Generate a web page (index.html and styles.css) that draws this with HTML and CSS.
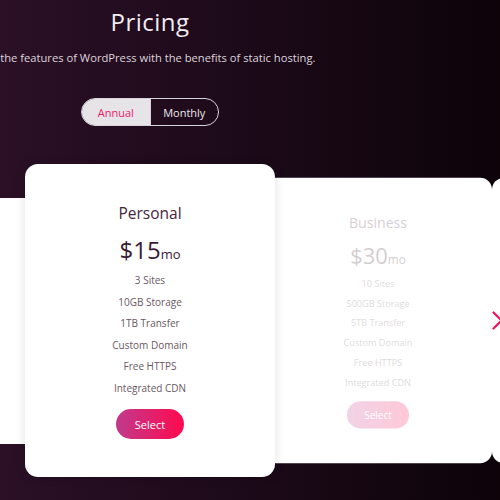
FILE: index.html
```html
<!DOCTYPE html>
<html>
<head>
<meta charset="utf-8">
<link rel="stylesheet" href="styles.css">
</head>
<body>
<main class="page">
  <header class="hero">
    <h1 class="title">Pricing</h1>
    <div class="subtitle"><p>All the features of WordPress with the benefits of static hosting.</p></div>
    <div class="toggle">
      <span class="opt active">Annual</span>
      <span class="opt">Monthly</span>
    </div>
  </header>
  <section class="carousel">
    <div class="track">
      <article class="card side">
        <div class="content">
          <h2 class="plan">Hobby</h2>
          <div class="price">$5<span class="unit">mo</span></div>
          <ul class="features">
            <li>1 Site</li><li>1GB Storage</li><li>100GB Transfer</li><li>Free HTTPS</li>
          </ul>
          <button class="select">Select</button>
        </div>
      </article>
      <article class="card main">
        <div class="content">
          <h2 class="plan">Personal</h2>
          <div class="price">$15<span class="unit">mo</span></div>
          <ul class="features">
            <li>3 Sites</li><li>10GB Storage</li><li>1TB Transfer</li><li>Custom Domain</li><li>Free HTTPS</li><li>Integrated CDN</li>
          </ul>
          <button class="select">Select</button>
        </div>
      </article>
      <article class="card side">
        <div class="content">
          <h2 class="plan">Business</h2>
          <div class="price">$30<span class="unit">mo</span></div>
          <ul class="features">
            <li>10 Sites</li><li>500GB Storage</li><li>5TB Transfer</li><li>Custom Domain</li><li>Free HTTPS</li><li>Integrated CDN</li>
          </ul>
          <button class="select">Select</button>
        </div>
      </article>
      <article class="card side">
        <div class="content">
          <h2 class="plan">Agency</h2>
          <div class="price">$60<span class="unit">mo</span></div>
          <ul class="features">
            <li>50 Sites</li><li>2TB Storage</li><li>20TB Transfer</li><li>Custom Domain</li><li>Free HTTPS</li><li>Integrated CDN</li>
          </ul>
          <button class="select">Select</button>
        </div>
      </article>
    </div>
    <button class="next" aria-label="Next">
      <svg width="12" height="20" viewBox="0 0 12 20"><path d="M1.5 1.5 L9.5 9.5 L1.5 17.5" fill="none" stroke="#f2125c" stroke-width="2.2" stroke-linecap="round" stroke-linejoin="round"/></svg>
    </button>
  </section>
</main>
</body>
</html>
```
FILE: styles.css
```css
* { box-sizing: border-box; }
html, body { margin: 0; padding: 0; }
body {
  width: 500px;
  height: 500px;
  overflow: hidden;
  background: linear-gradient(90deg, #2b1026 0%, #1d0a1a 45%, #0d0309 100%);
  font-family: "Open Sans", "DejaVu Sans", sans-serif;
}
.page { position: relative; width: 500px; height: 500px; }
.hero {
  width: 300px;
  display: flex;
  flex-direction: column;
  align-items: center;
}
.title {
  margin: 6px 0 0;
  font-weight: 400;
  font-size: 24px;
  line-height: 32px;
  color: #f1ecf1;
  letter-spacing: 0.5px;
}
.subtitle {
  width: 300px;
  display: flex;
  justify-content: center;
  margin-top: 11px;
}
.subtitle p {
  margin: 0;
  white-space: nowrap;
  font-size: 11.2px;
  line-height: 18px;
  color: #ddd4dc;
}
.toggle {
  margin-top: 31px;
  display: flex;
  width: 138px;
  height: 28px;
  border: 1.5px solid #d9d4d9;
  border-radius: 14px;
  overflow: hidden;
}
.opt {
  flex: 1;
  display: flex;
  align-items: center;
  justify-content: center;
  font-size: 11px;
  color: #ece6ec;
}
.opt.active {
  background: #e7e4e7;
  color: #ec1a6c;
  border-right: 1.5px solid #d9d4d9;
}
.carousel {
  margin-top: 38px;
  height: 313px;
  display: flex;
  align-items: center;
}
.track {
  display: flex;
  align-items: center;
  margin-left: -203px;
}
.card {
  flex: 0 0 250px;
  width: 250px;
  background: #fff;
  border-radius: 13px;
  padding: 38px 0;
  text-align: center;
}
.card + .card { margin-left: -22px; }
.card.side { transform: scale(0.912); }
.card.side .content { opacity: 0.22; }
.card.main {
  position: relative;
  z-index: 2;
  box-shadow: 0 0 12px rgba(0, 0, 0, 0.12);
}
.plan {
  margin: 0;
  font-weight: 400;
  font-size: 15.5px;
  line-height: 22px;
  color: #45263d;
}
.price {
  margin-top: 11px;
  height: 30px;
  font-size: 24px;
  line-height: 30px;
  color: #3a1b32;
}
.unit { font-size: 13px; line-height: 1; }
.features {
  list-style: none;
  margin: 5px 0 0;
  padding: 0;
}
.features li {
  font-size: 10px;
  line-height: 21.5px;
  color: #6a5864;
}
.select {
  display: block;
  margin: 10px auto 0;
  width: 68px;
  height: 30px;
  border: 0;
  border-radius: 15px;
  background: linear-gradient(90deg, #c03a8c 0%, #ff0a4e 100%);
  color: #fff;
  font-family: inherit;
  font-size: 11px;
}
.next {
  position: absolute;
  left: 492px;
  top: 311px;
  padding: 0;
  border: 0;
  background: none;
  line-height: 0;
}
```
